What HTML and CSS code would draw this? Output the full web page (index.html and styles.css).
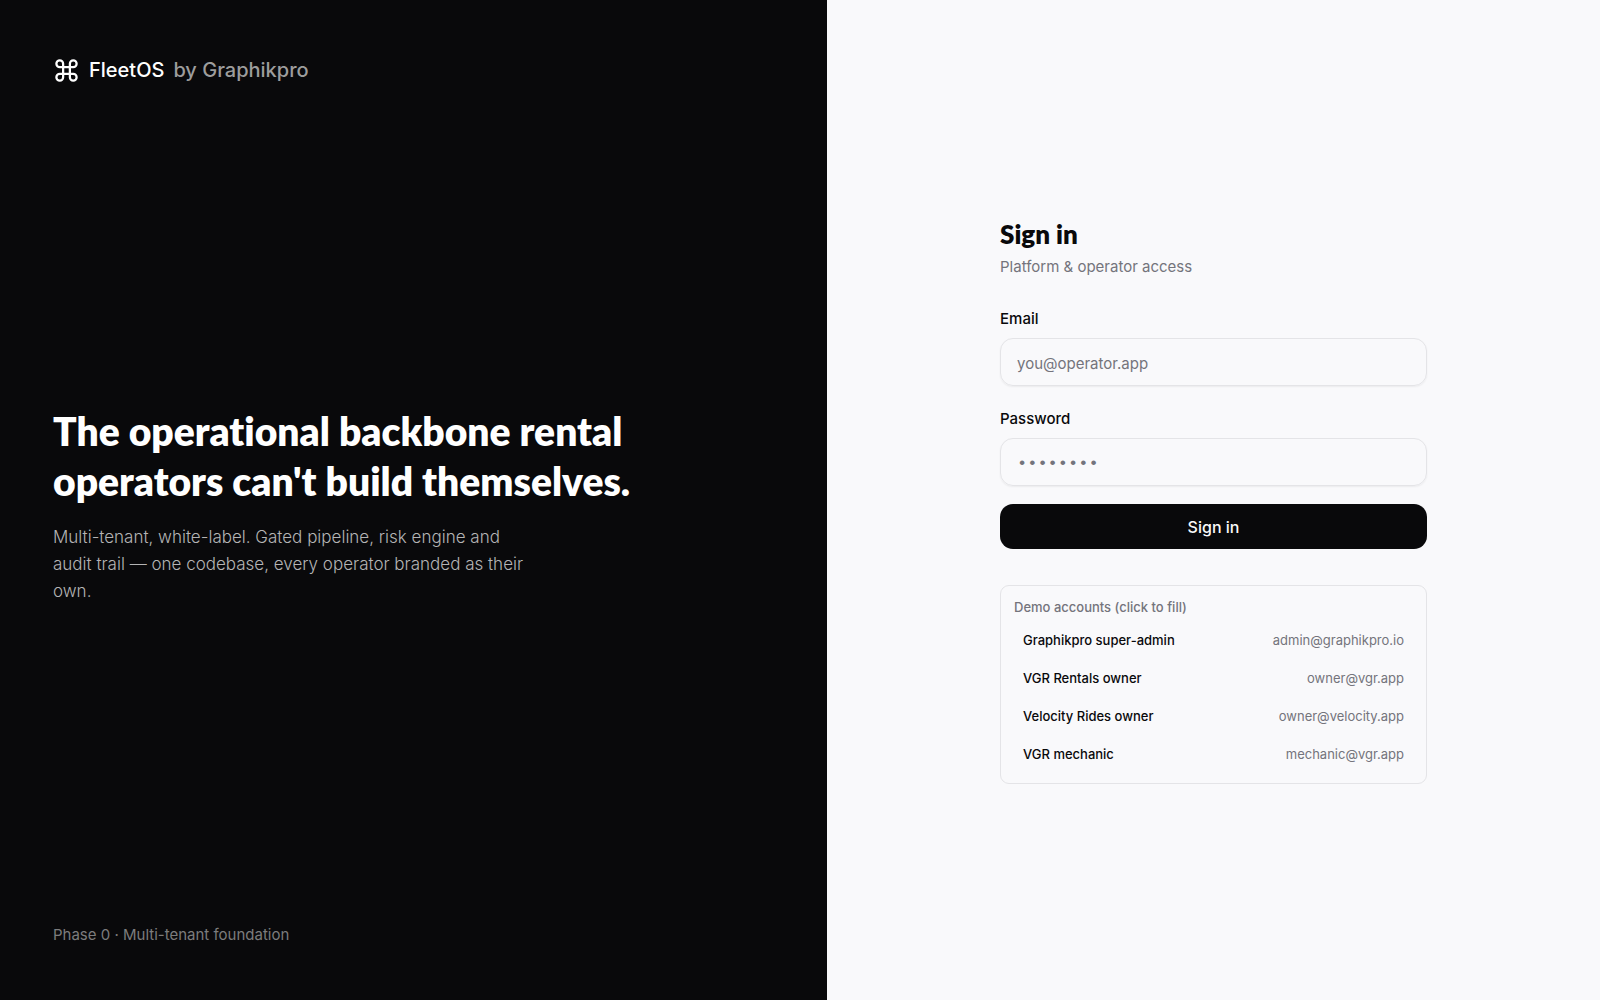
FILE: index.html
```html
<!DOCTYPE html>
<html lang="en">
<head>
<meta charset="utf-8">
<meta name="viewport" content="width=device-width, initial-scale=1">
<title>Sign in · FleetOS</title>
<link rel="stylesheet" href="styles.css">
</head>
<body>
<div class="layout">
  <aside class="brand-panel">
    <div class="brand">
      <svg class="brand-icon" viewBox="0 0 24 24" fill="none" stroke="currentColor" stroke-width="2" stroke-linecap="round" stroke-linejoin="round" aria-hidden="true"><path d="M15 6v12a3 3 0 1 0 3-3H6a3 3 0 1 0 3 3V6a3 3 0 1 0-3 3h12a3 3 0 1 0-3-3"/></svg>
      <span>FleetOS</span>
      <span class="brand-by">by Graphikpro</span>
    </div>
    <div class="pitch">
      <h1>The operational backbone rental<br>operators can't build themselves.</h1>
      <p>Multi-tenant, white-label. Gated pipeline, risk engine and<br>audit trail — one codebase, every operator branded as their<br>own.</p>
    </div>
    <p class="phase">Phase 0 · Multi-tenant foundation</p>
  </aside>
  <main class="access">
    <div class="access-inner">
      <h2>Sign in</h2>
      <p class="subtitle">Platform &amp; operator access</p>
      <form class="form">
        <div class="field">
          <label for="email">Email</label>
          <input id="email" type="email" placeholder="you@operator.app">
        </div>
        <div class="field">
          <label for="password">Password</label>
          <input id="password" class="password" type="password" placeholder="••••••••">
        </div>
        <button class="submit" type="submit">Sign in</button>
      </form>
      <section class="demo">
        <p>Demo accounts (click to fill)</p>
        <button class="account" type="button"><span>Graphikpro super-admin</span><span class="mail">admin@graphikpro.io</span></button>
        <button class="account" type="button"><span>VGR Rentals owner</span><span class="mail">owner@vgr.app</span></button>
        <button class="account" type="button"><span>Velocity Rides owner</span><span class="mail">owner@velocity.app</span></button>
        <button class="account" type="button"><span>VGR mechanic</span><span class="mail">mechanic@vgr.app</span></button>
      </section>
    </div>
  </main>
</div>
</body>
</html>
```
FILE: styles.css
```css
* { box-sizing: border-box; }
body, h1, h2, p { margin: 0; }
body {
  font-family: Inter, "Liberation Sans", sans-serif;
  font-size: 15px;
  line-height: 24px;
  color: #09090b;
  background: #f9f9fb;
}
button, input { font: inherit; color: inherit; }
.layout {
  display: grid;
  grid-template-columns: 107fr 100fr;
  min-height: 100vh;
}
.brand-panel {
  display: flex;
  flex-direction: column;
  justify-content: space-between;
  padding: 53px;
  color: #fff;
  background: #09090b;
}
.brand {
  display: flex;
  align-items: center;
  gap: 9px;
  font-size: 20px;
  font-weight: 500;
  line-height: 34px;
}
.brand-icon { width: 27px; height: 27px; }
.brand-by { color: #9d9d9d; }
h1, h2 {
  font-family: Lato, Inter, sans-serif;
  font-weight: 800;
  font-variant-ligatures: none;
}
h1 { font-size: 39px; line-height: 50px; }
h2 { font-size: 26px; line-height: 36px; }
.pitch p {
  margin-top: 18px;
  font-size: 17px;
  font-weight: 300;
  line-height: 27px;
  color: #b4b4b5;
}
.phase { color: #7c7c7d; }
.access {
  display: flex;
  align-items: center;
  justify-content: center;
  padding: 32px;
}
.access-inner { width: 100%; max-width: 427px; }
.subtitle { margin-top: 3px; color: #74747c; }
.form {
  display: flex;
  flex-direction: column;
  gap: 18px;
  margin-top: 28px;
}
.field { display: flex; flex-direction: column; gap: 7px; }
.field + .field { margin-top: 3px; }
label { font-weight: 500; }
input {
  width: 100%;
  height: 48px;
  padding: 2px 16px 0;
  border: 1px solid #e4e4e7;
  border-radius: 13px;
  background: transparent;
  box-shadow: 0 1px 2px rgba(0, 0, 0, .06);
}
input::placeholder { color: #74747c; opacity: 1; }
.password { font-family: "Liberation Mono", monospace; font-size: 17px; }
.submit {
  height: 45px;
  padding: 0;
  border: 0;
  border-radius: 13px;
  color: #fafafa;
  background: #09090b;
  font-size: 16px;
  font-weight: 500;
}
.demo {
  display: flex;
  flex-direction: column;
  margin-top: 36px;
  padding: 12px 13px 10px;
  border: 1px solid #e4e4e7;
  border-radius: 9px;
  font-size: 13px;
  line-height: 18px;
}
.demo p { margin-bottom: 5px; color: #74747c; font-weight: 500; }
.account {
  display: flex;
  justify-content: space-between;
  padding: 10px 9px;
  border: 0;
  background: transparent;
  font-weight: 500;
}
.mail { color: #74747c; font-weight: 400; }
```
